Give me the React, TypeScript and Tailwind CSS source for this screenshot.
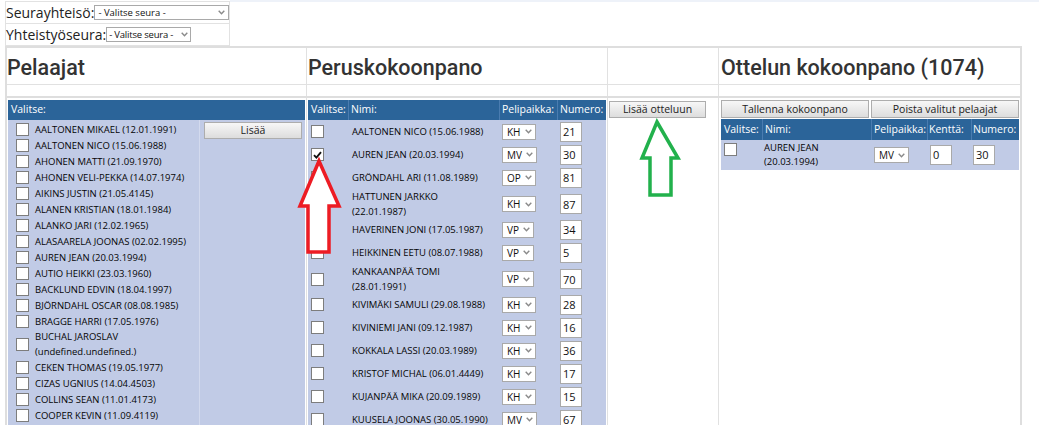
import React from "react";

type PoolRow = { name: string; sub?: string };
type LineupRow = { name: string; sub?: string; pos: string; num: string; checked?: boolean };

const pool: PoolRow[] = [
  { name: "AALTONEN MIKAEL (12.01.1991)" },
  { name: "AALTONEN NICO (15.06.1988)" },
  { name: "AHONEN MATTI (21.09.1970)" },
  { name: "AHONEN VELI-PEKKA (14.07.1974)" },
  { name: "AIKINS JUSTIN (21.05.4145)" },
  { name: "ALANEN KRISTIAN (18.01.1984)" },
  { name: "ALANKO JARI (12.02.1965)" },
  { name: "ALASAARELA JOONAS (02.02.1995)" },
  { name: "AUREN JEAN (20.03.1994)" },
  { name: "AUTIO HEIKKI (23.03.1960)" },
  { name: "BACKLUND EDVIN (18.04.1997)" },
  { name: "BJÖRNDAHL OSCAR (08.08.1985)" },
  { name: "BRAGGE HARRI (17.05.1976)" },
  { name: "BUCHAL JAROSLAV", sub: "(undefined.undefined.)" },
  { name: "CEKEN THOMAS (19.05.1977)" },
  { name: "CIZAS UGNIUS (14.04.4503)" },
  { name: "COLLINS SEAN (11.01.4173)" },
  { name: "COOPER KEVIN (11.09.4119)" },
  { name: "" },
];

const lineup: LineupRow[] = [
  { name: "AALTONEN NICO (15.06.1988)", pos: "KH", num: "21" },
  { name: "AUREN JEAN (20.03.1994)", pos: "MV", num: "30", checked: true },
  { name: "GRÖNDAHL ARI (11.08.1989)", pos: "OP", num: "81" },
  { name: "HATTUNEN JARKKO", sub: "(22.01.1987)", pos: "KH", num: "87" },
  { name: "HAVERINEN JONI (17.05.1987)", pos: "VP", num: "34" },
  { name: "HEIKKINEN EETU (08.07.1988)", pos: "VP", num: "5" },
  { name: "KANKAANPÄÄ TOMI", sub: "(28.01.1991)", pos: "VP", num: "70" },
  { name: "KIVIMÄKI SAMULI (29.08.1988)", pos: "KH", num: "28" },
  { name: "KIVINIEMI JANI (09.12.1987)", pos: "KH", num: "16" },
  { name: "KOKKALA LASSI (20.03.1989)", pos: "KH", num: "36" },
  { name: "KRISTOF MICHAL (06.01.4449)", pos: "KH", num: "17" },
  { name: "KUJANPÄÄ MIKA (20.09.1989)", pos: "KH", num: "15" },
  { name: "KUUSELA JOONAS (30.05.1990)", pos: "MV", num: "67" },
];

function Check({ checked = false }: { checked?: boolean }) {
  return (
    <div className="flex h-[13px] w-[13px] shrink-0 items-center justify-center border border-[#7d7d7d] bg-white">
      {checked && (
        <svg width="9" height="8" viewBox="0 0 9 8">
          <path d="M1 4.2 L3.4 6.6 L8 1.2" fill="none" stroke="#111" strokeWidth="1.9" />
        </svg>
      )}
    </div>
  );
}

function Chevron() {
  return (
    <svg width="7" height="5" viewBox="0 0 7 5" className="shrink-0">
      <path d="M0.7 0.8 L3.5 3.8 L6.3 0.8" fill="none" stroke="#8a8a8a" strokeWidth="1.4" />
    </svg>
  );
}

function Select({ value }: { value: string }) {
  return (
    <div className="inline-flex h-[16px] items-center gap-[4px] border border-[#a9a9a9] bg-white pl-[4px] pr-[3px] text-[10px] leading-none text-[#111]">
      <span>{value}</span>
      <Chevron />
    </div>
  );
}

function NumBox({ value }: { value: string }) {
  return (
    <div className="flex h-[20px] w-[22px] items-center border border-[#a9a9a9] bg-white pl-[2px] text-[11px] text-[#111]">
      {value}
    </div>
  );
}

function Btn({ children, className = "" }: { children: React.ReactNode; className?: string }) {
  return (
    <div
      className={
        "flex items-center justify-center border border-[#adadad] bg-linear-to-b from-[#f7f7f7] to-[#dddddd] text-[10.5px] leading-none text-[#222] " +
        className
      }
    >
      {children}
    </div>
  );
}

export default function App() {
  return (
    <div className="relative h-[425px] w-[1039px] overflow-hidden bg-white font-['Open_Sans',sans-serif] text-[#050505]">
      <div className="absolute left-[230px] right-0 top-0 h-[2px] bg-[#eef2f9]" />

      {/* filters */}
      <div className="ml-[5px] mt-[1px] w-[225px] border border-[#e2e2e2] text-[14px] text-[#222]">
        <div className="flex h-[22px] items-center border-b border-[#e2e2e2]">
          <span>Seurayhteisö:</span>
          <div className="flex h-[15px] w-[136px] items-center justify-between whitespace-nowrap border border-[#a9a9a9] bg-white pl-[3px] pr-[3px] text-[9.5px] leading-none text-[#111]">
            <span>- Valitse seura -</span>
            <Chevron />
          </div>
        </div>
        <div className="flex h-[21px] items-center">
          <span>Yhteistyöseura:</span>
          <div className="flex h-[15px] w-[85px] items-center justify-between gap-[2px] whitespace-nowrap border border-[#a9a9a9] bg-white pl-[2px] pr-[2px] text-[9.5px] leading-none tracking-[-0.2px] text-[#111]">
            <span>- Valitse seura -</span>
            <Chevron />
          </div>
        </div>
      </div>

      {/* main table */}
      <div className="ml-[5px] w-[1017px] border-2 border-b-0 border-[#dedede]">
        <div className="grid grid-cols-[300px_301px_111px_301px] font-['Roboto',sans-serif] text-[21.5px] font-medium text-[#333]">
          <div className="h-[37px] border-r border-b border-[#e1e1e1] pt-[1px] leading-[37px]">Pelaajat</div>
          <div className="h-[37px] border-r border-b border-[#e1e1e1] pl-[1px] pt-[1px] leading-[37px]">Peruskokoonpano</div>
          <div className="h-[37px] border-r border-b border-[#e1e1e1]" />
          <div className="h-[37px] border-b border-[#e1e1e1] pl-[2px] pt-[1px] leading-[37px]">Ottelun kokoonpano (1074)</div>
        </div>
        <div className="grid h-[13px] grid-cols-[300px_301px_111px_301px] border-b-2 border-[#dedede]">
          <div className="border-r border-[#e1e1e1]" />
          <div className="border-r border-[#e1e1e1]" />
          <div className="border-r border-[#e1e1e1]" />
          <div />
        </div>

        <div className="grid h-[330px] grid-cols-[300px_301px_111px_301px]">
          {/* pool */}
          <div className="border-r border-[#e1e1e1] px-[1px] pt-[2px]">
            <div className="flex h-[20px] items-center bg-[#2b6499] pl-[3px] text-[10.5px] text-white">Valitse:</div>
            <div className="flex h-full bg-[#c1cbe6]">
              <div className="w-[191px] pt-[1px]">
                {pool.map((p, i) => (
                  <div key={i} className={"flex items-center gap-[6px] pl-[8px] text-[9.5px] font-medium leading-[15px] " + (p.sub ? "h-[30px]" : "h-[16px]")}>
                    <Check />
                    <div className="whitespace-nowrap">
                      <div>{p.name}</div>
                      {p.sub && <div>{p.sub}</div>}
                    </div>
                  </div>
                ))}
              </div>
              <div className="flex-1 border-l border-[#d3daee] pl-[4px] pt-[2px]">
                <Btn className="h-[17px] w-[98px]">Lisää</Btn>
              </div>
            </div>
          </div>

          {/* base lineup */}
          <div className="border-r border-[#e1e1e1] pl-[1px] pr-[1px] pt-[2px]">
            <div className="grid h-[20px] grid-cols-[40px_151px_58px_48px] bg-[#2b6499] text-[10.5px] text-white">
              <div className="flex items-center pl-[3px]">Valitse:</div>
              <div className="flex items-center border-l border-[#4a7cb0] pl-[2px]">Nimi:</div>
              <div className="flex items-center border-l border-[#4a7cb0] pl-[2px]">Pelipaikka:</div>
              <div className="flex items-center border-l border-[#4a7cb0] pl-[2px]">Numero:</div>
            </div>
            <div className="h-full bg-[#c1cbe6]">
              {lineup.map((r) => (
                <div key={r.name} className={"grid grid-cols-[40px_151px_58px_48px] text-[9.5px] font-medium leading-[15px] " + (r.sub ? "h-[29px]" : "h-[23px]")}>
                  <div className="flex items-center pl-[3px]">
                    <Check checked={r.checked} />
                  </div>
                  <div className="flex flex-col justify-center whitespace-nowrap pl-[4px]">
                    <div>{r.name}</div>
                    {r.sub && <div>{r.sub}</div>}
                  </div>
                  <div className="flex items-center pl-[3px]">
                    <Select value={r.pos} />
                  </div>
                  <div className="flex items-center pl-[3px]">
                    <NumBox value={r.num} />
                  </div>
                </div>
              ))}
            </div>
          </div>

          {/* add */}
          <div className="border-r border-[#e1e1e1] pl-[1px] pt-[3px]">
            <Btn className="h-[17px] w-[97px]">Lisää otteluun</Btn>
          </div>

          {/* match lineup */}
          <div className="pl-[2px] pt-[2px]">
            <div className="flex gap-[2px]">
              <Btn className="h-[18px] w-[148px]">Tallenna kokoonpano</Btn>
              <Btn className="h-[18px] w-[148px]">Poista valitut pelaajat</Btn>
            </div>
            <div className="mt-[1px] grid h-[21px] w-[298px] grid-cols-[41px_109px_56px_44px_48px] bg-[#2b6499] text-[10.5px] text-white">
              <div className="flex items-center pl-[3px]">Valitse:</div>
              <div className="flex items-center border-l border-[#4a7cb0] pl-[2px]">Nimi:</div>
              <div className="flex items-center border-l border-[#4a7cb0] pl-[2px]">Pelipaikka:</div>
              <div className="flex items-center border-l border-[#4a7cb0] pl-[1px]">Kenttä:</div>
              <div className="flex items-center border-l border-[#4a7cb0] pl-[1px]">Numero:</div>
            </div>
            <div className="grid h-[30px] w-[298px] grid-cols-[41px_109px_56px_44px_48px] bg-[#c1cbe6] text-[9.5px] font-medium leading-[14px]">
              <div className="pl-[3px] pt-[3px]">
                <Check />
              </div>
              <div className="flex flex-col justify-center pl-[2px]">
                <div>AUREN JEAN</div>
                <div>(20.03.1994)</div>
              </div>
              <div className="flex items-center pl-[3px]">
                <Select value="MV" />
              </div>
              <div className="flex items-center pl-[3px]">
                <NumBox value="0" />
              </div>
              <div className="flex items-center pl-[2px]">
                <NumBox value="30" />
              </div>
            </div>
          </div>
        </div>
      </div>

      {/* annotation arrows */}
      <svg className="pointer-events-none absolute left-0 top-0" width="1039" height="425">
        <polygon
          points="319,161 339,206 329,206 329,252 308,252 308,206 300,206"
          fill="#fff"
          stroke="#ed1c24"
          strokeWidth="3.5"
          strokeLinejoin="miter"
        />
        <polygon
          points="657,122 678,158 671,158 671,195 650,195 650,158 642,158"
          fill="#fff"
          stroke="#22b14c"
          strokeWidth="3.5"
          strokeLinejoin="miter"
        />
      </svg>
    </div>
  );
}
